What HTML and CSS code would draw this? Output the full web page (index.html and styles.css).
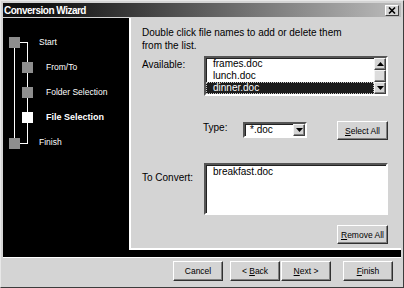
FILE: index.html
```html
<!DOCTYPE html>
<html>

<head>
  <title>Conversion Wizard</title>
  <link rel="stylesheet" href="styles.css">
</head>

<body>
  <div id="wizard">
    <div id="title-bar">
      <span id="title">Conversion Wizard</span>
      <span id="close-btn">
        <svg width="8" height="7" viewBox="0 0 8 7">
          <path d="M1 0.5 L7 6.5 M7 0.5 L1 6.5" stroke="#000" stroke-width="1.6" fill="none"/>
        </svg>
      </span>
    </div>

    <div id="wizard-body">
      <div id="steps">
        <!-- tree lines and step markers -->
        <svg id="step-tree" width="126" height="140" shape-rendering="crispEdges">
          <rect x="11" y="30" width="1" height="90" fill="#fff"/>
          <rect x="17" y="24" width="8" height="1" fill="#fff"/>
          <rect x="24" y="24" width="1" height="102" fill="#fff"/>
          <rect x="17" y="125" width="8" height="1" fill="#fff"/>
          <rect class="marker" x="6" y="19" width="11" height="11"/>
          <rect class="marker" x="19" y="44" width="11" height="11"/>
          <rect class="marker" x="19" y="69" width="11" height="11"/>
          <rect class="marker current" x="19" y="94" width="11" height="11"/>
          <rect class="marker" x="6" y="120" width="11" height="11"/>
        </svg>
        <ul id="step-list">
          <li class="step main">Start</li>
          <li class="step sub">From/To</li>
          <li class="step sub">Folder Selection</li>
          <li class="step sub current">File Selection</li>
          <li class="step main">Finish</li>
        </ul>
      </div>

      <div id="page">
        <p id="intro">Double click file names to add or delete them<br>from the list.</p>

        <div class="field-row" id="available-row">
          <label class="field-label">Available:</label>
          <div class="list-box">
            <div class="list-items">
              <div class="list-item">frames.doc</div>
              <div class="list-item">lunch.doc</div>
              <div class="list-item selected">dinner.doc</div>
            </div>
            <div class="scrollbar">
              <div class="scroll-btn">
                <svg width="7" height="4" viewBox="0 0 7 4"><polygon points="0,4 3.5,0 7,4" fill="#000"/></svg>
              </div>
              <div class="scroll-thumb"></div>
              <div class="scroll-btn">
                <svg width="7" height="4" viewBox="0 0 7 4"><polygon points="0,0 7,0 3.5,4" fill="#000"/></svg>
              </div>
            </div>
          </div>
        </div>

        <div class="field-row" id="type-row">
          <label class="type-label">Type:</label>
          <div class="combo">
            <span class="combo-value">*.doc</span>
            <span class="combo-btn">
              <svg width="7" height="4" viewBox="0 0 7 4"><polygon points="0,0 7,0 3.5,4" fill="#000"/></svg>
            </span>
          </div>
          <button class="btn small-btn" id="select-all"><u>S</u>elect All</button>
        </div>

        <div class="field-row" id="convert-row">
          <label class="field-label convert-label">To Convert:</label>
          <div class="text-box">breakfast.doc</div>
        </div>

        <div class="field-row" id="remove-row">
          <button class="btn small-btn"><u>R</u>emove All</button>
        </div>
      </div>
    </div>

    <div id="footer">
      <button class="btn" id="cancel-btn">Cancel</button>
      <button class="btn" id="back-btn">&lt; <u>B</u>ack</button>
      <button class="btn" id="next-btn"><u>N</u>ext &gt;</button>
      <button class="btn"><u>F</u>inish</button>
    </div>
  </div>
</body>

</html>
```

FILE: styles.css
```css
body {
  margin: 0;
  font-family: "Liberation Sans", Arial, sans-serif;
  font-size: 10px;
  background: #d4d4d4;
}

#wizard {
  width: 404px;
  height: 288px;
  box-sizing: border-box;
  border: 1px solid;
  border-color: #e8e8e8 #3c3c3c #3c3c3c #e8e8e8;
  padding: 2px;
  background: #d4d4d4;
  display: flex;
  flex-direction: column;
}

#title-bar {
  height: 14px;
  margin-bottom: 1px;
  padding: 0 2px 0 1px;
  display: flex;
  align-items: center;
  justify-content: space-between;
  background: linear-gradient(to right, #101010 10%, #bcbcbc);
}

#title {
  color: #fff;
  font-weight: bold;
  font-size: 10px;
  letter-spacing: -0.5px;
}

#close-btn {
  width: 14px;
  height: 11px;
  box-sizing: border-box;
  display: flex;
  align-items: center;
  justify-content: center;
  background: #d4d4d4;
  border: 1px solid;
  border-color: #fff #404040 #404040 #fff;
}

#wizard-body {
  flex: 1;
  display: flex;
  background: #000;
  padding-bottom: 7px;
}

#steps {
  width: 126px;
  position: relative;
  color: #fff;
}

#step-tree {
  position: absolute;
  top: 0;
  left: 0;
}

#step-tree .marker {
  fill: #8e8e8e;
}

#step-tree .marker.current {
  fill: #fff;
}

#step-list {
  list-style: none;
  margin: 0;
  padding: 12px 0 0 0;
  position: relative;
}

.step {
  height: 25px;
  line-height: 25px;
  font-size: 8.5px;
  white-space: nowrap;
}

.step.main {
  padding-left: 36px;
}

.step.sub {
  padding-left: 43px;
}

.step.current {
  font-weight: bold;
  font-size: 9px;
}

#page {
  flex: 1;
  background: #d4d4d4;
  border-left: 2px solid #fff;
  border-bottom: 2px solid #fff;
  padding: 8px 13px 0 11px;
}

#intro {
  margin: 0;
  line-height: 13px;
}

.field-row {
  display: flex;
}

.field-label {
  width: 62px;
  line-height: 13px;
  padding-top: 2px;
}

#available-row {
  margin-top: 4px;
}

.list-box {
  width: 184px;
  height: 40px;
  box-sizing: border-box;
  display: flex;
  background: #fff;
  border: 2px solid;
  border-color: #555 #fff #fff #555;
  box-shadow: inset 1px 1px #222;
}

.list-items {
  flex: 1;
}

.list-item {
  height: 12px;
  line-height: 12px;
  padding-left: 7px;
}

.list-item.selected {
  background: #1c1c1c;
  color: #fff;
  outline: 1px dotted #c8c8c8;
  outline-offset: -1px;
}

.scrollbar {
  width: 12px;
  display: flex;
  flex-direction: column;
  background: #e8e8e8;
}

.scroll-btn,
.scroll-thumb,
.combo-btn {
  box-sizing: border-box;
  background: #d4d4d4;
  border: 1px solid;
  border-color: #f4f4f4 #404040 #404040 #f4f4f4;
  box-shadow: inset -1px -1px #808080;
  display: flex;
  align-items: center;
  justify-content: center;
}

.scroll-btn {
  height: 12px;
}

.scroll-thumb {
  flex: 1;
  background: #dcdcdc;
}

#type-row {
  margin-top: 25px;
  padding-left: 61px;
  align-items: flex-start;
}

.type-label {
  width: 40px;
  line-height: 13px;
}

.combo {
  width: 64px;
  height: 16px;
  margin-top: 1px;
  box-sizing: border-box;
  display: flex;
  background: #fff;
  border: 2px solid;
  border-color: #555 #fff #fff #555;
  box-shadow: inset 1px 1px #222;
}

.combo-value {
  flex: 1;
  padding-left: 5px;
  line-height: 12px;
}

.combo-btn {
  width: 12px;
  height: 12px;
}

.btn {
  width: 50px;
  height: 20px;
  box-sizing: border-box;
  padding: 0;
  font-family: "Liberation Sans", Arial, sans-serif;
  font-size: 8.5px;
  color: #000;
  background: #d4d4d4;
  border: 1px solid;
  border-color: #fff #303030 #303030 #fff;
  box-shadow: inset -1px -1px #808080;
}

.small-btn {
  width: 51px;
  height: 19px;
}

#select-all {
  margin-left: auto;
}

#convert-row {
  margin-top: 23px;
}

.convert-label {
  padding-top: 8px;
}

.text-box {
  width: 184px;
  height: 52px;
  box-sizing: border-box;
  padding: 1px 7px;
  line-height: 12px;
  background: #fff;
  border: 2px solid;
  border-color: #555 #fff #fff #555;
  box-shadow: inset 1px 1px #222;
}

#remove-row {
  margin-top: 10px;
  justify-content: flex-end;
}

#footer {
  height: 28px;
  box-sizing: border-box;
  border-top: 1px solid #fff;
  padding: 3px 8px 0 0;
  display: flex;
  justify-content: flex-end;
}

#cancel-btn {
  margin-right: 7px;
}

#back-btn {
  margin-right: 1px;
}

#next-btn {
  margin-right: 12px;
}
```
